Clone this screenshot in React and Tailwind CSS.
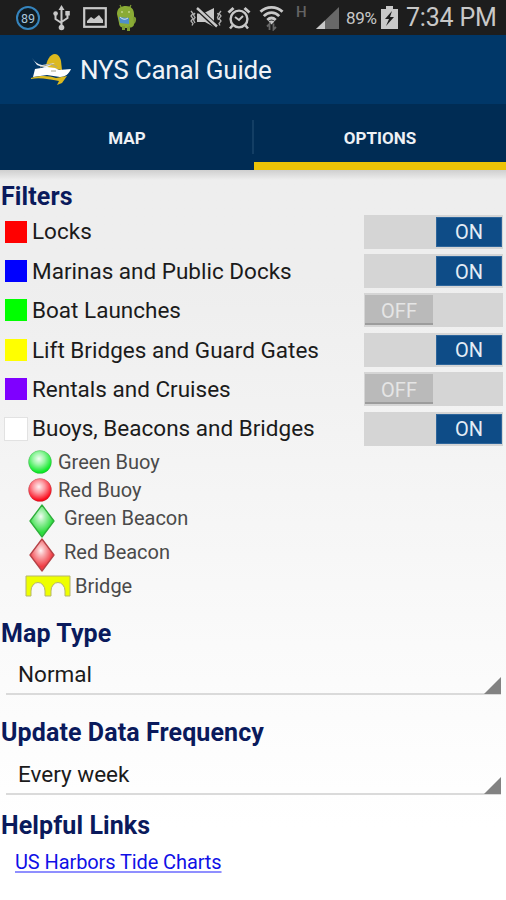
import React, { useState } from 'react';
import clsx from 'clsx';

const FILTERS = [
    { id: 'locks', label: 'Locks', swatch: 'bg-[#ff0000]' },
    { id: 'marinas', label: 'Marinas and Public Docks', swatch: 'bg-[#0000ff]' },
    { id: 'launches', label: 'Boat Launches', swatch: 'bg-[#00ff00]' },
    { id: 'bridges', label: 'Lift Bridges and Guard Gates', swatch: 'bg-[#ffff00]' },
    { id: 'rentals', label: 'Rentals and Cruises', swatch: 'bg-[#7f00ff]' },
    { id: 'buoys', label: 'Buoys, Beacons and Bridges', swatch: 'bg-white outline outline-1 outline-[#e2e2e2]' },
];

function StatusBar() {
    return (
        <div className="flex h-[35px] items-center bg-[#1d1d1d] text-[#c8c8c8]">
            <svg className="ml-[15px] h-[26px] w-[26px] shrink-0" viewBox="0 0 26 26">
                <circle cx="13" cy="13" r="11" fill="#101b22" stroke="#3584bd" strokeWidth="2" />
                <text x="13" y="17.5" textAnchor="middle" fontSize="12.5" fontFamily="Roboto, sans-serif" fill="#a9c6dc">89</text>
            </svg>
            <svg className="ml-[12px] h-[26px] w-[17px] shrink-0" viewBox="0 0 17 26" fill="none" stroke="#c8c8c8" strokeWidth="2">
                <path d="M8.5 4v19M2.5 9v5l6 4M14.5 8v5l-6 4" />
                <path d="M8.5 0l3 5h-6z" fill="#c8c8c8" stroke="none" />
                <circle cx="8.5" cy="22.5" r="2.8" fill="#c8c8c8" stroke="none" />
                <circle cx="2.6" cy="8.5" r="2.3" fill="#c8c8c8" stroke="none" />
                <path d="M12.3 6h4.500v4.500h-4.500z" fill="#c8c8c8" stroke="none" />
            </svg>
            <svg className="ml-[13px] h-[21px] w-[24px] shrink-0" viewBox="0 0 24 21">
                <rect x="1.2" y="1.2" width="21.6" height="18.6" fill="none" stroke="#c8c8c8" strokeWidth="2.2" />
                <path d="M4 16v-2l4-4 3 2 5-4 4 5v3z" fill="#c8c8c8" />
            </svg>
            <svg className="ml-[9px] h-[28px] w-[21px] shrink-0" viewBox="0 0 21 28">
                <path d="M4 1l2 4M15 1l-2 4" stroke="#7d9a33" strokeWidth="1.2" />
                <path d="M1 10C1 4 5 2 10 2s8 3 8 8v10c0 3-3 4-8 4s-7-2-7-5z" fill="#8aab35" />
                <path d="M17 13c4-2 4 5 1 7M6 22v4h3v-4M11 23v4h3v-5" fill="#7d9a33" />
                <path d="M3 13l10 1v6l-9-1z" fill="#4f8fc9" />
                <path d="M4 13q4 4 8 1" fill="none" stroke="#d4e1e8" />
                <circle cx="6" cy="8" r="1" fill="#c3d488" />
                <circle cx="13" cy="8" r="1" fill="#c3d488" />
            </svg>
            <svg className="ml-[52px] h-[22px] w-[34px] shrink-0" viewBox="0 0 34 22">
                <path d="M8 6.500h6L25 1v19l-9-5H8z" fill="#c8c8c8" />
                <path d="M8 1l20 19" stroke="#1d1d1d" strokeWidth="5" />
                <path d="M8 1l20 18.500" stroke="#c8c8c8" strokeWidth="2.4" />
                <path d="M2 4l2 2.500-2 2.500 2 2.500-2 2.500 2 2.500-1 2M6 6l-1.500 2 1.500 2.500-1.500 2.500L6 16M32 4l-2 2.500 2 2.500-2 2.500 2 2.500-2 2.500 1 2M28.500 6l1 2-1 2.500 1 2.500" fill="none" stroke="#b0b0b0" strokeWidth="1.300" />
            </svg>
            <svg className="ml-[4px] h-[24px] w-[24px] shrink-0" viewBox="0 0 24 24" fill="none" stroke="#c8c8c8">
                <circle cx="12" cy="13" r="8.400" strokeWidth="2.400" />
                <path d="M8 11l4 3 4-4" strokeWidth="2" />
                <path d="M1.500 6.500l5-4.500M22.500 6.500l-5-4.500" strokeWidth="3" />
                <path d="M5.500 19.500L3 22.500M18.500 19.500l2.500 3" strokeWidth="2.500" />
            </svg>
            <svg className="ml-[8px] h-[26px] w-[25px] shrink-0" viewBox="0 0 25 26" fill="none" stroke="#c8c8c8" strokeWidth="2.800">
                <path d="M1.500 6.800c6-6 16-6 22 0M4.800 11.100c4.500-4.700 11-4.700 15.400 0M8.300 15c2.600-2.500 5.800-2.500 8.400 0" />
                <path d="M12.500 19.500l-3-3q3-2 6 0z" fill="#c8c8c8" stroke="none" />
                <path d="M10.500 25v-6l-2.500 2.500M14.500 18.500v6l2.500-2.500" stroke="#666" strokeWidth="1.800" />
            </svg>
            <span className="ml-[12px] mb-[10px] w-[10px] text-[15px] leading-none font-medium text-[#646464]">H</span>
            <svg className="ml-[10px] h-[22px] w-[23px] shrink-0" viewBox="0 0 23 22">
                <path d="M0 22L23 0v22z" fill="#686868" />
                <path d="M0 22l9-8.600V22z" fill="#c8c8c8" />
            </svg>
            <span className="ml-[7px] w-[32px] pt-px text-[17px] leading-none tracking-[-0.3px] whitespace-nowrap">89%</span>
            <svg className="ml-[3px] h-[24px] w-[17px] shrink-0" viewBox="0 0 17 24">
                <path d="M5 0h7v3h5v20H0V3h5z" fill="#c8c8c8" />
                <path d="M11 5l-7 8h4l-3 7 8-9H9z" fill="#1d1d1d" />
            </svg>
            <span className="ml-[8px] text-[25px] leading-none tracking-[-0.2px] whitespace-nowrap">7:34 PM</span>
        </div>
    );
}

function BoatLogo() {
    return (
        <svg className="mb-[2px] ml-[30px] h-[32px] w-[42px] shrink-0" viewBox="0 0 42 32">
            <path d="M16 15C16 8 20 1 25 1c3 0 5 3 6 7l1 9z" fill="#dcb91f" />
            <path d="M2 5q4 6 10 7l13-2-10 5-8-3z" fill="#e9edf2" />
            <path d="M5 16l12-2 8 1 4 2 12-1c-2 5-6 8-11 8L17 22 3 24z" fill="#fff" />
            <path d="M10 14l11-3 6 3M21 18h5" fill="none" stroke="#a8a58c" strokeWidth="1" />
            <path d="M1 25c10-3 19-2 25 0l11-2-5 7-5 2 2-4C19 26 9 24 1 26z" fill="#dcb91f" />
        </svg>
    );
}

function Toggle({ on, onToggle, label }) {
    return (
        <button
            type="button"
            role="switch"
            aria-checked={on}
            aria-label={label}
            onClick={onToggle}
            className={clsx('flex h-[34px] w-[139px] items-center bg-[#d5d5d5] px-[1px]', on && 'justify-end')}
        >
            <span
                className={clsx(
                    'flex h-[30px] items-center justify-center text-[20px] leading-none',
                    on
                        ? 'w-[66px] border border-[#2d659b] bg-[#0e4c87] pt-px text-[#e4edf5]'
                        : 'w-[68px] border-b-2 border-[#9c9c9c] bg-[#bababa] pt-[3px] text-[#e5e5e5]'
                )}
            >
                {on ? 'ON' : 'OFF'}
            </span>
        </button>
    );
}

function Buoy({ id, color }) {
    return (
        <svg className="h-[24px] w-[24px] shrink-0" viewBox="0 0 24 24">
            <defs>
                <radialGradient id={id} cx="0.45" cy="0.36" r="0.65">
                    <stop offset="0" stopColor="#fff" stopOpacity="0.95" />
                    <stop offset="0.4" stopColor="#fff" stopOpacity="0.6" />
                    <stop offset="0.9" stopColor="#fff" stopOpacity="0.05" />
                    <stop offset="1" stopColor="#fff" stopOpacity="0" />
                </radialGradient>
            </defs>
            <circle cx="12" cy="12" r="11.5" fill={color} />
            <circle cx="12" cy="12" r="11.5" fill={`url(#${id})`} stroke="#555" strokeOpacity="0.25" strokeWidth="0.8" />
        </svg>
    );
}

function Beacon({ id, color, edge }) {
    return (
        <svg className="h-[34px] w-[26px] shrink-0" viewBox="0 0 26 34">
            <defs>
                <radialGradient id={id} cx="0.45" cy="0.36" r="0.5">
                    <stop offset="0" stopColor="#fff" stopOpacity="0.95" />
                    <stop offset="0.3" stopColor="#fff" stopOpacity="0.65" />
                    <stop offset="1" stopColor="#fff" stopOpacity="0.05" />
                </radialGradient>
            </defs>
            <path d="M13 1l12 16-12 16L1 17z" fill={color} />
            <path d="M13 1l12 16-12 16L1 17z" fill={`url(#${id})`} stroke={edge} strokeWidth="1.300" strokeLinejoin="round" />
        </svg>
    );
}

function BridgeIcon() {
    return (
        <svg className="h-[22px] w-[46px] shrink-0" viewBox="0 0 46 22">
            <path
                d="M1 1h44v20h-5v-5a7 8.500 0 0 0-14 0v5h-6v-5a7 8.500 0 0 0-14 0v5H1z"
                fill="#eeff00"
                stroke="#b5b56c"
                strokeWidth="1"
            />
        </svg>
    );
}

function Heading({ children, className }) {
    return (
        <h2 className={clsx('flex h-[32px] items-center pl-px text-[25px] leading-none font-bold tracking-[0.1px] whitespace-nowrap text-[#0a1a5c]', className)}>
            {children}
        </h2>
    );
}

function Spinner({ value }) {
    return (
        <div className="mr-[5px] ml-[6px] flex h-[46px] items-end justify-between border-b-2 border-[#dadada]">
            <span className="pb-[7px] pl-[12px] text-[22.5px] leading-[24px]">{value}</span>
            <svg className="-mb-[1px] h-[17px] w-[17px]" viewBox="0 0 17 17">
                <path d="M17 0v17H0z" fill="#828282" />
            </svg>
        </div>
    );
}

export default function App() {
    const [enabled, setEnabled] = useState({
        locks: true,
        marinas: true,
        launches: false,
        bridges: true,
        rentals: false,
        buoys: true,
    });

    return (
        <div className="flex h-[900px] w-[506px] flex-col overflow-hidden bg-white font-['Roboto',sans-serif] text-[#1b1b1b]">
            <StatusBar />

            <header className="flex h-[69px] items-center bg-[#003768]">
                <BoatLogo />
                <h1 className="ml-[8px] text-[26px] leading-none tracking-[-0.2px] whitespace-nowrap text-[#f0f3f7]">NYS Canal Guide</h1>
            </header>

            <nav className="flex h-[66px] bg-[#002c54] text-[17px] leading-none font-bold text-[#eef1f5]">
                <button type="button" className="flex w-[254px] items-center justify-end">
                    <span className="flex h-[34px] w-full items-center justify-center border-r-2 border-[#133e64] pt-[2px] pl-[2px]">MAP</span>
                </button>
                <button type="button" className="flex flex-1 items-center justify-center border-b-8 border-[#ecc307] pt-[10px]">
                    OPTIONS
                </button>
            </nav>

            <main className="flex flex-1 flex-col bg-linear-to-b from-[#eeeeee] from-15% via-[#fafafa] via-65% to-white to-90%">
                <div className="h-[10px] bg-linear-to-b from-[#cfcfcf] to-[#eeeeee]" />
                <Heading>Filters</Heading>

                <ul>
                    {FILTERS.map((filter) => (
                        <li key={filter.id} className="flex h-[39.4px] items-center pr-[3px] pl-[5px]">
                            <span className={clsx('h-[22px] w-[22px]', filter.swatch)} />
                            <span className="ml-[5px] flex-1 text-[22.5px] leading-none whitespace-nowrap">
                                {filter.label}
                            </span>
                            <Toggle
                                label={filter.label}
                                on={enabled[filter.id]}
                                onToggle={() => setEnabled({ ...enabled, [filter.id]: !enabled[filter.id] })}
                            />
                        </li>
                    ))}
                </ul>

                <ul className="text-[20px] leading-none text-[#4a4a4a]">
                    <li className="flex h-[28px] items-center gap-[6px] pl-[28px]">
                        <Buoy id="buoy-green" color="#00e81c" />
                        Green Buoy
                    </li>
                    <li className="flex h-[28px] items-center gap-[6px] pl-[28px]">
                        <Buoy id="buoy-red" color="#fa0012" />
                        Red Buoy
                    </li>
                    <li className="flex h-[34px] items-center gap-[9px] pl-[29px]">
                        <Beacon id="beacon-green" color="#22dc35" edge="#2fae3b" />
                        <span className="-mt-[6px]">Green Beacon</span>
                    </li>
                    <li className="flex h-[34px] items-center gap-[9px] pl-[29px]">
                        <Beacon id="beacon-red" color="#f0323a" edge="#b54247" />
                        <span className="-mt-[6px]">Red Beacon</span>
                    </li>
                    <li className="flex h-[31px] items-start gap-[4px] pt-[3px] pl-[25px]">
                        <BridgeIcon />
                        <span className="leading-[22px]">Bridge</span>
                    </li>
                </ul>

                <Heading className="mt-[14px]">Map Type</Heading>
                <Spinner value="Normal" />
                <Heading className="mt-[21px] mb-px">Update Data Frequency</Heading>
                <Spinner value="Every week" />
                <Heading className="mt-[14px]">Helpful Links</Heading>
                <a href="#tides" className="mt-[9px] ml-[15px] self-start text-[20px] leading-[24px] tracking-[-0.1px] whitespace-nowrap text-[#1010e6] underline decoration-[#8f8fff] decoration-2 underline-offset-2">
                    US Harbors Tide Charts
                </a>
            </main>
        </div>
    );
}
